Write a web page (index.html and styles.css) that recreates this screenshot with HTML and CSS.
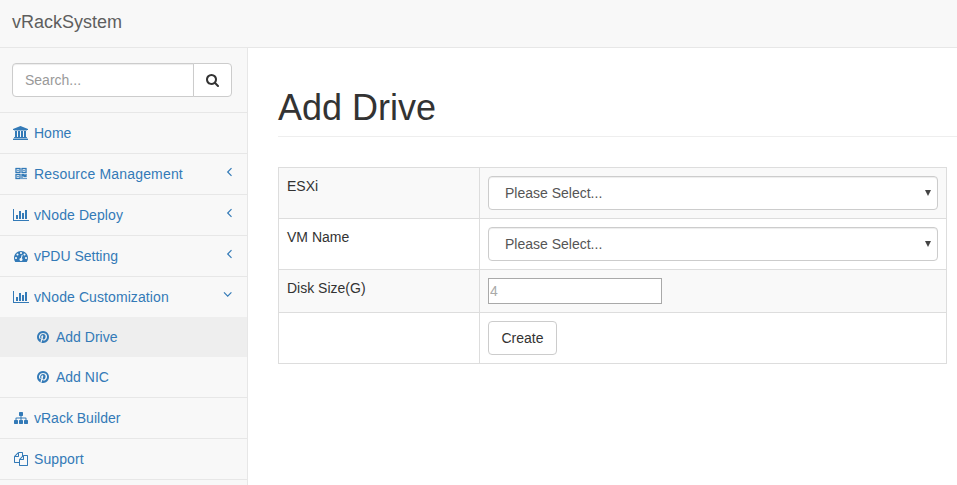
FILE: index.html
```html
<!DOCTYPE html>
<html lang="en">
<head>
<meta charset="utf-8">
<title>vRackSystem</title>
<link rel="stylesheet" href="styles.css">
</head>
<body>
<header class="navbar"><a class="brand">vRackSystem</a></header>
<div class="layout">
  <nav class="sidebar">
    <div class="search">
      <input class="search-input" type="text" placeholder="Search...">
      <button class="search-btn" aria-label="Search"><svg width="13" height="14" viewBox="64 0 1664 1792"><path d="M1216 832q0-185-131.500-316.500t-316.500-131.500-316.500 131.500-131.500 316.500 131.500 316.500 316.500 131.500 316.500-131.500 131.500-316.500zm512 832q0 52-38 90t-90 38q-54 0-90-38l-343-342q-179 124-399 124-143 0-273.500-55.500t-225-150-150-225-55.500-273.500 55.500-273.500 150-225 225-150 273.500-55.500 273.500 55.500 225 150 150 225 55.500 273.500q0 220-124 399l343 343q37 37 37 90z"/></svg></button>
    </div>
    <ul class="menu">
      <li><a class="item"><svg class="icon" viewBox="0 0 18 20"><path transform="translate(1 3) scale(.0078125)" d="M960 0l960 384v128h-128q0 26-20.500 45t-48.500 19h-1526q-28 0-48.500-19t-20.500-45h-128v-128zm-704 640h256v768h128v-768h256v768h128v-768h256v768h128v-768h256v768h59q28 0 48.500 19t20.500 45v64h-1664v-64q0-26 20.500-45t48.500-19h59v-768zm1595 960q28 0 48.500 19t20.500 45v128h-1920v-128q0-26 20.500-45t48.500-19h1782z"/></svg><span>Home</span></a></li>
      <li><a class="item"><svg class="icon qr" viewBox="0 0 18 20"><path fill-rule="evenodd" transform="translate(3.500 4) scale(.0078125)" d="M0 0h640v640h-640zM128 128v384h384v-384zM256 256h128v128h-128zM768 0h640v640h-640zM896 128v384h384v-384zM1024 256h128v128h-128zM0 768h640v640h-640zM128 896v384h384v-384zM256 1024h128v128h-128zM768 768h384v128h128v-128h128v384h-384v-128h-128v384h-128zM1024 1280h128v128h-128zM1280 1280h128v128h-128z"/></svg><span class="wide">Resource Management</span><svg class="arrow" viewBox="0 0 10 20"><path d="M9.500 4.200L5.700 8l3.800 3.800"/></svg></a></li>
      <li><a class="item"><svg class="icon" viewBox="0 0 18 20"><path transform="translate(1 3) scale(.0078125)" d="M640 896v512h-256v-512h256zm384-512v1024h-256v-1024h256zm1024 1152v128h-2048v-1536h128v1408h1920zm-640-896v768h-256v-768h256zm384-384v1152h-256v-1152h256z"/></svg><span class="mid">vNode Deploy</span><svg class="arrow" viewBox="0 0 10 20"><path d="M9.500 4.200L5.700 8l3.800 3.800"/></svg></a></li>
      <li><a class="item"><svg class="icon" viewBox="0 0 18 20"><path transform="translate(2 3) scale(.0078125)" d="M384 1152q0-53-37.500-90.500t-90.500-37.500-90.500 37.500-37.500 90.500 37.500 90.500 90.500 37.500 90.500-37.500 37.500-90.500zm192-448q0-53-37.500-90.500t-90.500-37.500-90.500 37.500-37.500 90.500 37.500 90.500 90.500 37.500 90.500-37.500 37.500-90.500zm428 481l101-382q6-26-7.500-48.500t-38.500-29.500-48 6.500-30 39.500l-101 382q-60 5-107 43.500t-63 98.500q-20 77 20 146t117 89 146-20 89-117q16-60-6-117t-72-91zm660-33q0-53-37.500-90.500t-90.500-37.500-90.500 37.500-37.500 90.500 37.500 90.500 90.500 37.500 90.500-37.500 37.500-90.500zm-640-640q0-53-37.500-90.500t-90.500-37.500-90.500 37.500-37.500 90.500 37.500 90.500 90.500 37.500 90.500-37.500 37.500-90.500zm448 192q0-53-37.500-90.500t-90.500-37.500-90.500 37.500-37.500 90.500 37.500 90.500 90.500 37.500 90.500-37.500 37.500-90.500zm320 448q0 261-141 483-19 29-54 29h-1402q-35 0-54-29-141-221-141-483 0-182 71-348t191-286 286-191 348-71 348 71 286 191 191 286 71 348z"/></svg><span>vPDU Setting</span><svg class="arrow" viewBox="0 0 10 20"><path d="M9.500 4.200L5.700 8l3.800 3.800"/></svg></a></li>
      <li><a class="item"><svg class="icon" viewBox="0 0 18 20"><path transform="translate(1 3) scale(.0078125)" d="M640 896v512h-256v-512h256zm384-512v1024h-256v-1024h256zm1024 1152v128h-2048v-1536h128v1408h1920zm-640-896v768h-256v-768h256zm384-384v1152h-256v-1152h256z"/></svg><span class="mid">vNode Customization</span><svg class="arrow" viewBox="0 0 10 20"><path d="M2 5.400l3.700 3.700 3.700-3.700"/></svg></a>
        <ul class="submenu">
          <li><a class="item sub active"><svg class="icon" viewBox="0 0 18 20"><path transform="translate(2 3) scale(.0078125)" d="M1664 896q0 209-103 385.500t-279.500 279.500-385.500 103q-111 0-218-32 59-93 78-164 9-34 54-211 20 39 73 67.500t114 28.500q121 0 216-68.500t147-188.500 52-270q0-114-59.500-214t-172.500-163-255-63q-105 0-196 29t-154.500 77-109 110.500-67 129.500-21.500 134q0 104 40 183t117 111q30 12 38-20 2-7 8-31t8-30q6-23-11-43-51-61-51-151 0-151 104.500-259.500t273.500-108.500q151 0 235.500 82t84.500 213q0 170-68.500 289t-175.500 119q-61 0-98-43.500t-23-104.500q8-35 26.500-93.500t30-103 11.500-75.500q0-50-27-83t-77-33q-62 0-105 57t-43 142q0 73 25 122l-99 418q-17 70-13 177-206-91-333-281t-127-423q0-209 103-385.500t279.500-279.500 385.500-103 385.500 103 279.500 279.500 103 385.500z"/></svg><span>Add Drive</span></a></li>
          <li><a class="item sub"><svg class="icon" viewBox="0 0 18 20"><path transform="translate(2 3) scale(.0078125)" d="M1664 896q0 209-103 385.500t-279.500 279.500-385.500 103q-111 0-218-32 59-93 78-164 9-34 54-211 20 39 73 67.500t114 28.500q121 0 216-68.500t147-188.500 52-270q0-114-59.500-214t-172.500-163-255-63q-105 0-196 29t-154.500 77-109 110.500-67 129.500-21.500 134q0 104 40 183t117 111q30 12 38-20 2-7 8-31t8-30q6-23-11-43-51-61-51-151 0-151 104.500-259.500t273.500-108.500q151 0 235.500 82t84.500 213q0 170-68.500 289t-175.500 119q-61 0-98-43.500t-23-104.500q8-35 26.500-93.500t30-103 11.500-75.500q0-50-27-83t-77-33q-62 0-105 57t-43 142q0 73 25 122l-99 418q-17 70-13 177-206-91-333-281t-127-423q0-209 103-385.500t279.500-279.500 385.500-103 385.500 103 279.500 279.500 103 385.500z"/></svg><span>Add NIC</span></a></li>
        </ul>
      </li>
      <li><a class="item"><svg class="icon" viewBox="0 0 18 20"><path transform="translate(2 3) scale(.0078125)" d="M1792 1248v320q0 40-28 68t-68 28h-320q-40 0-68-28t-28-68v-320q0-40 28-68t68-28h96v-192h-512v192h96q40 0 68 28t28 68v320q0 40-28 68t-68 28h-320q-40 0-68-28t-28-68v-320q0-40 28-68t68-28h96v-192h-512v192h96q40 0 68 28t28 68v320q0 40-28 68t-68 28h-320q-40 0-68-28t-28-68v-320q0-40 28-68t68-28h96v-192q0-52 38-90t90-38h512v-192h-96q-40 0-68-28t-28-68v-320q0-40 28-68t68-28h320q40 0 68 28t28 68v320q0 40-28 68t-68 28h-96v192h512q52 0 90 38t38 90v192h96q40 0 68 28t28 68z"/></svg><span>vRack Builder</span></a></li>
      <li><a class="item"><svg class="icon" viewBox="0 0 18 20"><path transform="translate(2 3) scale(.0078125)" d="M1696 384q40 0 68 28t28 68v1216q0 40-28 68t-68 28h-960q-40 0-68-28t-28-68v-288h-544q-40 0-68-28t-28-68v-672q0-40 20-88t48-76l408-408q28-28 76-48t88-20h416q40 0 68 28t28 68v328q68-40 128-40h416zm-544 213l-299 299h299v-299zm-640-384l-299 299h299v-299zm196 647l316-316v-416h-384v416q0 40-28 68t-68 28h-416v640h512v-256q0-40 20-88t48-76zm956 804v-1152h-384v416q0 40-28 68t-68 28h-416v640h896z"/></svg><span class="mid">Support</span></a></li>
    </ul>
  </nav>
  <main class="content">
    <h1 class="title">Add Drive</h1>
    <table class="form-table">
      <tr><td class="label">ESXi</td><td><div class="select"><span>Please Select...</span><svg width="6" height="6" viewBox="0 0 6 6"><path d="M0 0h6L3 6z"/></svg></div></td></tr>
      <tr><td class="label">VM Name</td><td><div class="select"><span>Please Select...</span><svg width="6" height="6" viewBox="0 0 6 6"><path d="M0 0h6L3 6z"/></svg></div></td></tr>
      <tr><td class="label">Disk Size(G)</td><td><input class="size-input" type="text" placeholder="4"></td></tr>
      <tr><td class="label"></td><td><button class="create">Create</button></td></tr>
    </table>
  </main>
</div>
</body>
</html>
```
FILE: styles.css
```css
* { box-sizing: border-box; }
html, body { height: 100%; }
body {
  margin: 0;
  display: flex;
  flex-direction: column;
  overflow: hidden;
  background: #fff;
  color: #333;
  font: 14px/20px "Liberation Sans", Arial, sans-serif;
}
input, button { font: inherit; color: inherit; margin: 0; }
ul { list-style: none; margin: 0; padding: 0; }
.navbar {
  flex: 0 0 48px;
  padding: 12px;
  background: #f8f8f8;
  border-bottom: 1px solid #e7e7e7;
}
.brand { font-size: 18px; color: #5e5e5e; }
.layout { flex: 1; min-height: 0; display: flex; }
.sidebar {
  flex: 0 0 248px;
  background: #f8f8f8;
  border-right: 1px solid #e7e7e7;
}
.search {
  display: flex;
  height: 65px;
  padding: 15px 15px 15px 12px;
  border-bottom: 1px solid #e7e7e7;
}
.search-input {
  width: 182px;
  height: 34px;
  padding: 6px 12px;
  border: 1px solid #ccc;
  border-radius: 4px 0 0 4px;
  background: #fff;
  box-shadow: inset 0 1px 1px rgba(0, 0, 0, .075);
}
.search-input::placeholder { color: #999; opacity: 1; }
.search-btn {
  width: 39px;
  height: 34px;
  margin-left: -1px;
  padding: 0;
  display: flex;
  align-items: center;
  justify-content: center;
  border: 1px solid #ccc;
  border-radius: 0 4px 4px 0;
  background: #fff;
}
.search-btn svg { fill: #333; }
.menu > li { border-bottom: 1px solid #e7e7e7; }
.item {
  display: flex;
  gap: 4px;
  height: 40px;
  padding: 10px 15px 10px 12px;
  color: #337ab7;
}
.wide { letter-spacing: .18px; }
.mid { letter-spacing: .09px; }
.icon { width: 18px; height: 20px; fill: currentColor; }
.qr { stroke: currentColor; stroke-width: 40; }
.arrow {
  width: 10px;
  height: 20px;
  margin-left: auto;
  fill: none;
  stroke: currentColor;
  stroke-width: 1.2;
}
.sub { padding-left: 34px; }
.active { background: #eee; }
.content { flex: 1; min-width: 0; padding: 40px 0 0 30px; }
.title {
  height: 49px;
  margin: 0 0 30px;
  border-bottom: 1px solid #eee;
  font-size: 36px;
  font-weight: 500;
  line-height: 39px;
}
.form-table {
  width: 669px;
  border-collapse: collapse;
  table-layout: fixed;
}
.form-table td { padding: 8px; border: 1px solid #ddd; vertical-align: top; }
.form-table .label { width: 201px; }
.form-table tr:nth-child(odd) { background: #f9f9f9; }
.select {
  display: flex;
  align-items: center;
  justify-content: space-between;
  height: 34px;
  padding: 0 6px 0 16px;
  border: 1px solid #ccc;
  border-radius: 4px;
  background: #fff;
  color: #555;
  box-shadow: inset 0 1px 1px rgba(0, 0, 0, .075);
}
.select svg { fill: #444; }
.size-input {
  display: block;
  width: 174px;
  height: 26px;
  padding: 1px;
  border: 1px solid #a9a9a9;
  background: #fff;
}
.size-input::placeholder { color: #a9a9a9; opacity: 1; }
.create {
  display: block;
  width: 69px;
  height: 34px;
  padding: 0;
  border: 1px solid #ccc;
  border-radius: 4px;
  background: #fff;
}
```
